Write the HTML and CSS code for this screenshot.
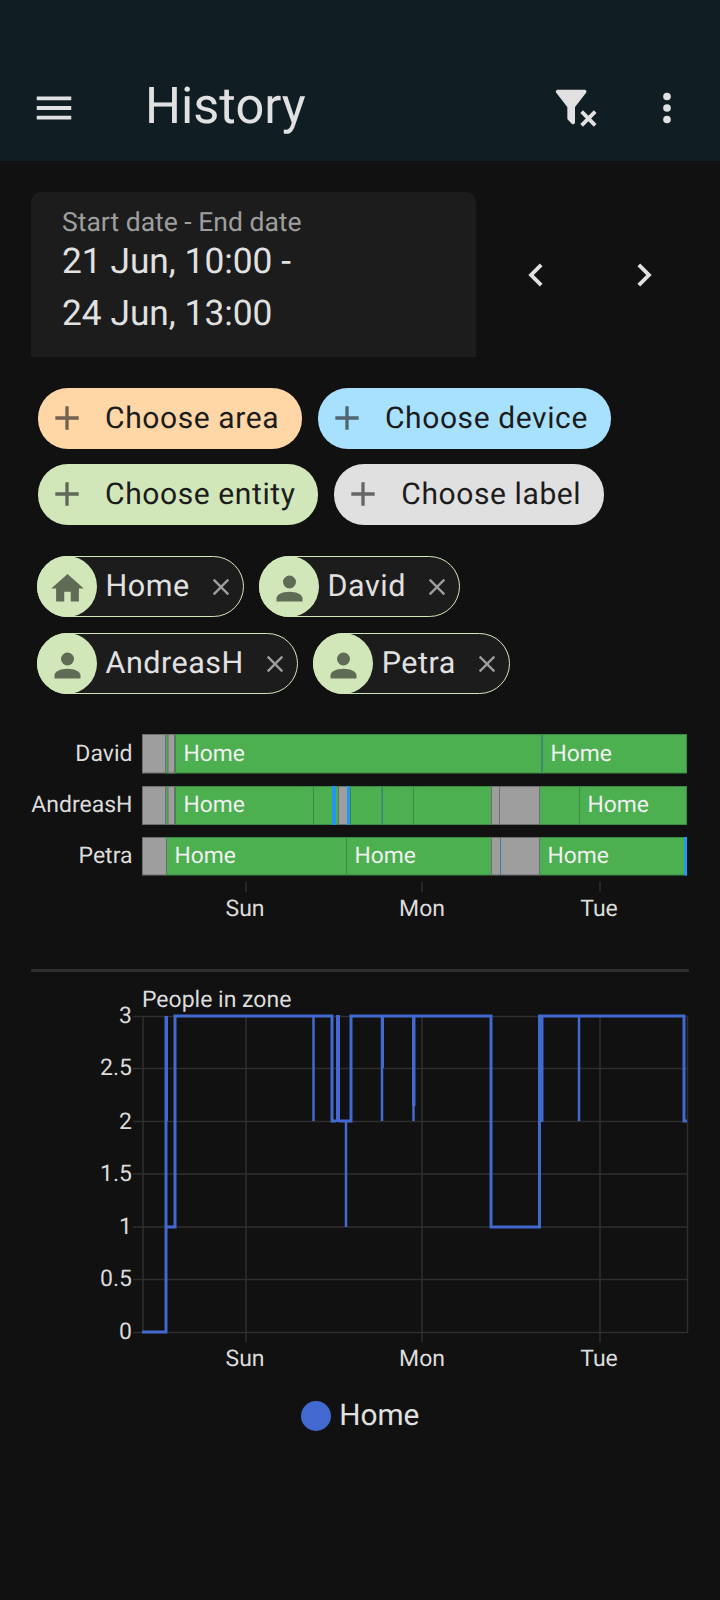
FILE: index.html
```html
<!DOCTYPE html>
<html lang="en">
<head>
<meta charset="utf-8">
<title>History</title>
<link rel="stylesheet" href="styles.css">
</head>
<body>
<header class="topbar">
  <svg class="bar-icon menu" viewBox="0 0 24 24"><path d="M3,6H21V8H3V6M3,11H21V13H3V11M3,16H21V18H3V16Z"/></svg>
  <h1 class="title">History</h1>
  <svg class="bar-icon filter" viewBox="0 0 24 24"><path d="M14.76,20.83L17.6,18L14.76,15.17L16.17,13.76L19,16.57L21.83,13.76L23.24,15.17L20.43,18L23.24,20.83L21.83,22.24L19,19.4L16.17,22.24L14.76,20.83M12,12V19.88C12.04,20.18 11.94,20.5 11.71,20.71C11.32,21.1 10.69,21.1 10.3,20.71L8.29,18.7C8.06,18.47 7.96,18.16 8,17.87V12H7.97L2.21,4.62C1.87,4.19 1.95,3.56 2.38,3.22C2.57,3.08 2.78,3 3,3V3H17V3C17.22,3 17.43,3.08 17.62,3.22C18.05,3.56 18.13,4.19 17.79,4.62L12.03,12H12Z"/></svg>
  <svg class="bar-icon dots" viewBox="0 0 24 24"><path d="M12,16A2,2 0 0,1 14,18A2,2 0 0,1 12,20A2,2 0 0,1 10,18A2,2 0 0,1 12,16M12,10A2,2 0 0,1 14,12A2,2 0 0,1 12,14A2,2 0 0,1 10,12A2,2 0 0,1 12,10M12,4A2,2 0 0,1 14,6A2,2 0 0,1 12,8A2,2 0 0,1 10,6A2,2 0 0,1 12,4Z"/></svg>
</header>

<section class="range">
  <div class="date-field">
    <div class="date-label">Start date - End date</div>
    <div class="date-value">21 Jun, 10:00 -<br>24 Jun, 13:00</div>
  </div>
  <svg class="bar-icon chev-left" viewBox="0 0 24 24"><path d="M15.41,16.58L10.83,12L15.41,7.41L14,6L8,12L14,18L15.41,16.58Z"/></svg>
  <svg class="bar-icon chev-right" viewBox="0 0 24 24"><path d="M8.59,16.58L13.17,12L8.59,7.41L10,6L16,12L10,18L8.59,16.58Z"/></svg>
</section>

<section class="pick-chips">
  <div class="pick area"><svg class="plus" viewBox="0 0 24 24"><path d="M19,13H13V19H11V13H5V11H11V5H13V11H19V13Z"/></svg><span>Choose area</span></div>
  <div class="pick device"><svg class="plus" viewBox="0 0 24 24"><path d="M19,13H13V19H11V13H5V11H11V5H13V11H19V13Z"/></svg><span>Choose device</span></div>
  <div class="pick entity"><svg class="plus" viewBox="0 0 24 24"><path d="M19,13H13V19H11V13H5V11H11V5H13V11H19V13Z"/></svg><span>Choose entity</span></div>
  <div class="pick label"><svg class="plus" viewBox="0 0 24 24"><path d="M19,13H13V19H11V13H5V11H11V5H13V11H19V13Z"/></svg><span>Choose label</span></div>
</section>

<section class="sel-chips">
  <div class="sel"><span class="avatar"><svg viewBox="0 0 24 24"><path d="M10,20V14H14V20H19V12H22L12,3L2,12H5V20H10Z"/></svg></span><span class="sel-name">Home</span><svg class="close" viewBox="0 0 24 24"><path d="M19,6.41L17.59,5L12,10.59L6.41,5L5,6.41L10.59,12L5,17.59L6.41,19L12,13.41L17.59,19L19,17.59L13.41,12L19,6.41Z"/></svg></div>
  <div class="sel"><span class="avatar"><svg viewBox="0 0 24 24"><path d="M12,4A4,4 0 0,1 16,8A4,4 0 0,1 12,12A4,4 0 0,1 8,8A4,4 0 0,1 12,4M12,14C16.42,14 20,15.79 20,18V20H4V18C4,15.79 7.58,14 12,14Z"/></svg></span><span class="sel-name">David</span><svg class="close" viewBox="0 0 24 24"><path d="M19,6.41L17.59,5L12,10.59L6.41,5L5,6.41L10.59,12L5,17.59L6.41,19L12,13.41L17.59,19L19,17.59L13.41,12L19,6.41Z"/></svg></div>
  <div class="sel"><span class="avatar"><svg viewBox="0 0 24 24"><path d="M12,4A4,4 0 0,1 16,8A4,4 0 0,1 12,12A4,4 0 0,1 8,8A4,4 0 0,1 12,4M12,14C16.42,14 20,15.79 20,18V20H4V18C4,15.79 7.58,14 12,14Z"/></svg></span><span class="sel-name">AndreasH</span><svg class="close" viewBox="0 0 24 24"><path d="M19,6.41L17.59,5L12,10.59L6.41,5L5,6.41L10.59,12L5,17.59L6.41,19L12,13.41L17.59,19L19,17.59L13.41,12L19,6.41Z"/></svg></div>
  <div class="sel"><span class="avatar"><svg viewBox="0 0 24 24"><path d="M12,4A4,4 0 0,1 16,8A4,4 0 0,1 12,12A4,4 0 0,1 8,8A4,4 0 0,1 12,4M12,14C16.42,14 20,15.79 20,18V20H4V18C4,15.79 7.58,14 12,14Z"/></svg></span><span class="sel-name">Petra</span><svg class="close" viewBox="0 0 24 24"><path d="M19,6.41L17.59,5L12,10.59L6.41,5L5,6.41L10.59,12L5,17.59L6.41,19L12,13.41L17.59,19L19,17.59L13.41,12L19,6.41Z"/></svg></div>
</section>

<svg class="timeline" viewBox="0 725 720 200">
  <g class="axis-text end">
    <text x="132.500" y="761">David</text>
    <text x="132.500" y="812">AndreasH</text>
    <text x="132.500" y="863">Petra</text>
  </g>
  <g class="seg green">
    <rect x="165.500" y="734.500" width="10" height="38.500"/>
    <rect x="175.500" y="734.500" width="366.500" height="38.500"/><rect x="542" y="734.500" width="144.500" height="38.500"/>
    <rect x="165.500" y="786.500" width="10" height="38"/>
    <rect x="175.500" y="786.500" width="138" height="38"/><rect x="313.500" y="786.500" width="37" height="38"/><rect x="350.500" y="786.500" width="32" height="38"/><rect x="382.500" y="786.500" width="31" height="38"/><rect x="413.500" y="786.500" width="78" height="38"/><rect x="539.500" y="786.500" width="40" height="38"/><rect x="579.500" y="786.500" width="107" height="38"/>
    <rect x="166.500" y="837.500" width="180" height="37.500"/><rect x="346.500" y="837.500" width="145" height="37.500"/><rect x="539.500" y="837.500" width="147" height="37.500"/>
  </g>
  <g class="seg gray">
    <rect x="142.500" y="734.500" width="23" height="38.500"/><rect x="168" y="734.500" width="6.500" height="38.500"/>
    <rect x="142.500" y="786.500" width="23" height="38"/><rect x="168" y="786.500" width="6.500" height="38"/>
    <rect x="338.500" y="786.500" width="9" height="38"/><rect x="491.500" y="786.500" width="48" height="38"/>
    <rect x="142.500" y="837.500" width="24" height="37.500"/><rect x="491.500" y="837.500" width="48" height="37.500"/>
  </g>
  <g class="seg blue">
    <rect x="332" y="786" width="4" height="39"/><rect x="347" y="786" width="3" height="39"/><rect x="684" y="837" width="3" height="38.500"/>
  </g>
  <g class="seg-line">
    <line x1="542" y1="735" x2="542" y2="773"/><line x1="382" y1="787" x2="382" y2="824"/><line x1="500.500" y1="838" x2="500.500" y2="875"/>
  </g>
  <g class="seg-line-gray">
    <line x1="499.500" y1="787" x2="499.500" y2="824"/>
  </g>
  <g class="seg-text">
    <text x="183.500" y="760.500">Home</text><text x="550.500" y="760.500">Home</text>
    <text x="183.500" y="811.500">Home</text><text x="587.500" y="811.500">Home</text>
    <text x="174.500" y="862.500">Home</text><text x="354.500" y="862.500">Home</text><text x="547.500" y="862.500">Home</text>
  </g>
  <g class="grid">
    <line x1="246" y1="882" x2="246" y2="892"/><line x1="422" y1="882" x2="422" y2="892"/><line x1="600" y1="882" x2="600" y2="892"/>
  </g>
  <g class="axis-text mid">
    <text x="245" y="916">Sun</text><text x="422" y="916">Mon</text><text x="599" y="916">Tue</text>
  </g>
</svg>

<div class="divider"></div>

<svg class="linechart" viewBox="0 985 720 395">
  <text class="axis-text" x="142" y="1006.500">People in zone</text>
  <g class="grid">
    <line x1="133" y1="1016.500" x2="687" y2="1016.500"/>
    <line x1="133" y1="1068.500" x2="687" y2="1068.500"/>
    <line x1="133" y1="1121.500" x2="687" y2="1121.500"/>
    <line x1="133" y1="1174" x2="687" y2="1174"/>
    <line x1="133" y1="1227" x2="687" y2="1227"/>
    <line x1="133" y1="1279.500" x2="687" y2="1279.500"/>
    <line x1="133" y1="1332.500" x2="687" y2="1332.500"/>
    <line x1="143" y1="1016" x2="143" y2="1333"/>
    <line x1="246" y1="1016" x2="246" y2="1342"/>
    <line x1="422" y1="1016" x2="422" y2="1342"/>
    <line x1="600" y1="1016" x2="600" y2="1342"/>
    <line x1="687.500" y1="1016" x2="687.500" y2="1333"/>
  </g>
  <g class="axis-text end">
    <text x="132" y="1023">3</text><text x="132" y="1075">2.5</text><text x="132" y="1128.500">2</text><text x="132" y="1181">1.5</text><text x="132" y="1234">1</text><text x="132" y="1286">0.5</text><text x="132" y="1339">0</text>
  </g>
  <path class="series" d="M142,1332H166V1016M166,1121V1227H175V1121M175,1227V1016H332V1121H336M339,1121H351V1016H491V1227H539.500V1016H684V1121H687"/>
  <path class="series-thin" d="M313.500,1016V1121M346,1121V1227M382,1016V1121M413.500,1016V1121M579,1016V1121"/>
  <rect class="series-fill" x="165" y="1016" width="3" height="105"/>
  <rect class="series-fill" x="336" y="1015" width="4" height="107"/>
  <rect class="series-fill" x="381" y="1016" width="3" height="52"/>
  <rect class="series-fill" x="412" y="1016" width="3.500" height="90"/>
  <rect class="series-fill" x="538.500" y="1015" width="5" height="107"/>
  <g class="axis-text mid">
    <text x="245" y="1366">Sun</text><text x="422" y="1366">Mon</text><text x="599" y="1366">Tue</text>
  </g>
</svg>

<div class="legend"><span class="legend-dot"></span><span class="legend-text">Home</span></div>
</body>
</html>
```
FILE: styles.css
```css
* { box-sizing: border-box; }
html, body { margin: 0; padding: 0; }
body {
  width: 720px;
  height: 1600px;
  overflow: hidden;
  background: #111111;
  color: #e1e1e1;
  font-family: Roboto, "Liberation Sans", sans-serif;
  text-rendering: geometricPrecision;
}

.topbar {
  height: 161px;
  padding: 85px 30px 0 31px;
  display: flex;
  align-items: flex-start;
  background: #101e24;
}
.bar-icon { width: 46px; height: 46px; fill: #e1e1e1; flex: none; }
.title {
  margin: -8px 0 0 68px;
  font-size: 50.500px;
  font-weight: 400;
  line-height: 60px;
  flex: 1;
}
.filter { margin-right: 46px; margin-top: -1px; }

.range {
  margin: 31px 0 0 31px;
  display: flex;
  align-items: center;
}
.date-field {
  width: 445px;
  height: 165px;
  padding: 16px 0 0 31px;
  background: #1c1c1c;
  border-radius: 10px 10px 0 0;
}
.date-label { font-size: 26.500px; line-height: 30px; color: #9e9e9e; }
.date-value { font-size: 35.300px; line-height: 52px; color: #e1e1e1; margin-top: -3px; }
.chev-left { margin-left: 37px; }
.chev-right { margin-left: 62px; }

.pick-chips {
  margin: 31px 0 0 38px;
  display: flex;
  flex-wrap: wrap;
  column-gap: 16px;
  row-gap: 15.500px;
  width: 640px;
}
.pick {
  height: 60.500px;
  display: flex;
  align-items: center;
  padding: 0 22.800px 0 9px;
  border-radius: 30px;
  color: #1c1c1c;
  font-size: 30px;
  letter-spacing: 0.600px;
}
.plus { width: 40px; height: 40px; margin-right: 18px; fill: currentColor; opacity: 0.62; flex: none; }
.area { background: #ffd6a5; }
.device { background: #a8e1fe; }
.entity { background: #d2e7b9; }
.label { background: #e0e0e0; }

.sel-chips {
  margin: 31.500px 0 0 37px;
  display: flex;
  flex-wrap: wrap;
  column-gap: 15.500px;
  row-gap: 16px;
  width: 640px;
}
.sel {
  height: 61px;
  display: flex;
  align-items: center;
  padding-right: 8px;
  border-radius: 31px;
  border: 1.500px solid #d2e7b9;
  background: #1c1c1c;
  font-size: 30.500px;
  letter-spacing: 0.500px;
}
.avatar {
  width: 60px;
  height: 61px;
  margin: 0 9px 0 -1.500px;
  border-radius: 50%;
  background: #d2e7b9;
  display: flex;
  align-items: center;
  justify-content: center;
  flex: none;
}
.avatar svg { width: 39px; height: 39px; margin: 4px 0 0 2px; fill: #606b55; }
.sel-name { color: #e1e1e1; }
.close { width: 28px; height: 28px; margin-left: 17px; fill: #9e9e9e; flex: none; }

.timeline { display: block; width: 720px; height: 200px; margin-top: 30.500px; }
.axis-text { font-size: 23px; fill: #dcdcdc; }
.end { text-anchor: end; }
.mid { text-anchor: middle; }
.seg rect { stroke-width: 1px; }
.gray rect { fill: #9e9e9e; stroke: #6e6e6e; }
.green rect { fill: #4caf50; stroke: #3d8a45; }
.blue rect { fill: #2196f3; stroke: none; }
.seg-line line { stroke: #3a7fa0; stroke-width: 1px; }
.seg-line-gray line { stroke: #6e6e6e; stroke-width: 1px; }
.seg-text text { font-size: 22.800px; fill: #f0f0f0; }
.grid line { stroke: #2f2f2f; stroke-width: 1.500px; }

.divider { height: 3px; width: 658px; margin: 44px 0 0 31px; background: #2f2f2f; }

.linechart { display: block; width: 720px; height: 395px; margin-top: 13px; }
.series { fill: none; stroke: #4269d0; stroke-width: 3px; }
.series-thin { fill: none; stroke: #4269d0; stroke-width: 2.500px; }
.series-fill { fill: #4269d0; }

.legend {
  margin-top: 18px;
  display: flex;
  justify-content: center;
  align-items: center;
  gap: 8.500px;
}
.legend-dot { width: 30px; height: 30px; border-radius: 50%; background: #4269d0; }
.legend-text { font-size: 29.800px; line-height: 36px; color: #e1e1e1; }
```
